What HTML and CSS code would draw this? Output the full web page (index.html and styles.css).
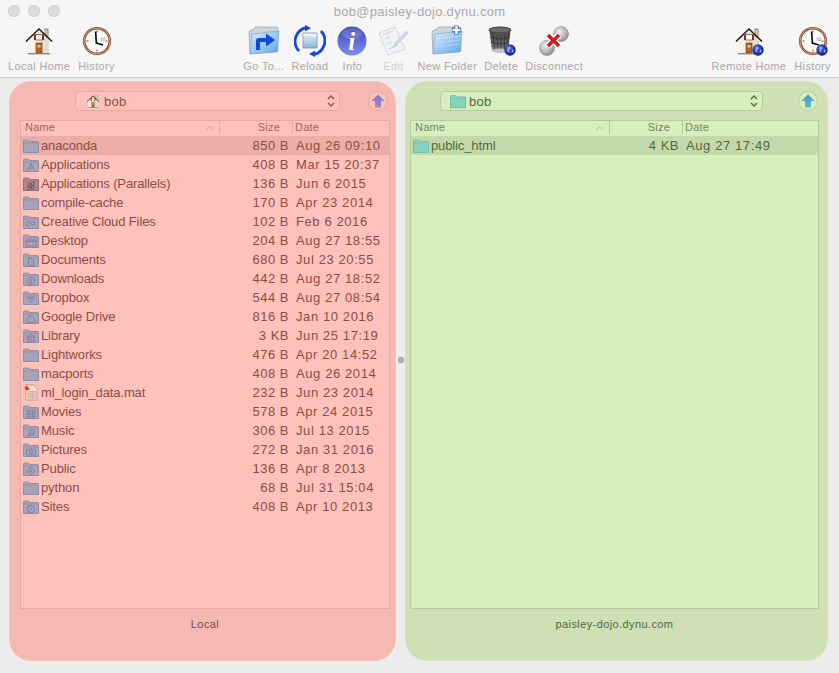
FILE: index.html
```html
<!DOCTYPE html>
<html lang="en">
<head>
    <meta charset="UTF-8">
    <meta name="viewport" content="width=device-width, initial-scale=1.0">
    <title>bob@paisley-dojo.dynu.com</title>
    <link rel="stylesheet" href="styles.css">
</head>
<body>
    <!-- shared icons -->
    <svg class="icon-defs" aria-hidden="true">
        <defs>
            <linearGradient id="blueFolder" x1="0" y1="0" x2="1" y2="1">
                <stop offset="0" stop-color="#d9ecfb"/>
                <stop offset="1" stop-color="#5fa6ea"/>
            </linearGradient>
            <linearGradient id="paleFolder" x1="0" y1="0" x2="0" y2="1">
                <stop offset="0" stop-color="#e8f1f8"/>
                <stop offset="1" stop-color="#8db9dd"/>
            </linearGradient>
            <linearGradient id="infoBlue" x1="0" y1="0" x2="0" y2="1">
                <stop offset="0" stop-color="#3a48b8"/>
                <stop offset="1" stop-color="#7f8fe8"/>
            </linearGradient>
            <linearGradient id="binGrey" x1="0" y1="0" x2="0" y2="1">
                <stop offset="0" stop-color="#4a4a4a"/>
                <stop offset="0.7" stop-color="#6b6b6b"/>
                <stop offset="1" stop-color="#c8c8c8"/>
            </linearGradient>
            <radialGradient id="ball" cx="0.4" cy="0.35" r="0.7">
                <stop offset="0" stop-color="#f2f2f2"/>
                <stop offset="1" stop-color="#8a8a8a"/>
            </radialGradient>
            <radialGradient id="globe" cx="0.4" cy="0.35" r="0.7">
                <stop offset="0" stop-color="#4c63e0"/>
                <stop offset="1" stop-color="#0c1a78"/>
            </radialGradient>
            <linearGradient id="upLocal" x1="0" y1="0" x2="0" y2="1">
                <stop offset="0" stop-color="#7c78d8"/>
                <stop offset="1" stop-color="#b083b8"/>
            </linearGradient>
            <linearGradient id="upRemote" x1="0" y1="0" x2="0" y2="1">
                <stop offset="0" stop-color="#3f93d8"/>
                <stop offset="1" stop-color="#6cbfb4"/>
            </linearGradient>

            <symbol id="house" viewBox="0 0 32 32">
                <rect x="22" y="4" width="3" height="8" fill="#d8cdbd" stroke="#554" stroke-width=".6"/>
                <path d="M6 15 L16 6 L26 15 V28 H6Z" fill="#e6dccb"/>
                <path d="M6 15 V28 H16 V9Z" fill="#f7f1e5"/>
                <path d="M3 16.5 L16 4 L29 16.5" fill="none" stroke="#1e1a18" stroke-width="1.6"/>
                <rect x="12.5" y="9.5" width="7" height="5.5" fill="#fff" stroke="#6b4030" stroke-width=".7"/>
                <rect x="11" y="9.5" width="2" height="5.5" fill="#8e2c1c"/>
                <rect x="19" y="9.5" width="2" height="5.5" fill="#8e2c1c"/>
                <rect x="13" y="18" width="6" height="10" fill="#b5622a" stroke="#6b3a1a" stroke-width=".6"/>
                <rect x="14.5" y="20" width="3" height="2.5" fill="#e9c48a"/>
                <rect x="5" y="28" width="22" height="1.4" fill="#8d8578"/>
            </symbol>

            <symbol id="clock" viewBox="0 0 32 32">
                <circle cx="16" cy="16" r="14" fill="#8d3f22"/>
                <circle cx="16" cy="16" r="13" fill="none" stroke="#c9a586" stroke-width="1"/>
                <circle cx="16" cy="16" r="11.5" fill="#f8f8f6"/>
                <path d="M16 5.5v2M16 24.5v2M5.5 16h2M24.5 16h2" stroke="#555" stroke-width="1"/>
                <path d="M14.6 6.5 L15.4 18 L22 20" fill="none" stroke="#111" stroke-width="1.7"/>
                <rect x="20" y="13" width="4" height="2.4" fill="#ddd" stroke="#999" stroke-width=".4"/>
            </symbol>

            <symbol id="goto" viewBox="0 0 32 32">
                <path d="M2 29 L1 8 Q1 5 4 5 L8 2 H28 L30 3 V26Z" fill="#cdd3da" stroke="#8a949e" stroke-width=".6"/>
                <path d="M2 29 L4 9 L31 6 L29 27Z" fill="url(#blueFolder)" stroke="#7a9fc4" stroke-width=".6"/>
                <path d="M12 25 H8 V16 Q8 13 11 13 H18 V8.5 L27 15 L18 21.5 V17 H13 Q12 17 12 18Z" fill="#0a48e0"/>
            </symbol>

            <symbol id="reload" viewBox="0 0 32 32">
                <path d="M9 8 H23 V23 H9Z" fill="url(#paleFolder)" stroke="#7d8b97" stroke-width=".7"/>
                <path d="M9 10 H23" stroke="#fff" stroke-width="1"/>
                <path d="M13 2.5 A14 14 0 0 0 5 26" fill="none" stroke="#1746e6" stroke-width="2.8"/>
                <path d="M19 29.5 A14 14 0 0 0 27 6" fill="none" stroke="#1746e6" stroke-width="2.8"/>
                <path d="M11 0 L17 3 L11 6.5Z" fill="#1746e6"/>
                <path d="M21 32 L15 29 L21 25.5Z" fill="#1746e6"/>
            </symbol>

            <symbol id="info" viewBox="0 0 32 32">
                <circle cx="16" cy="16" r="14.5" fill="url(#infoBlue)"/>
                <ellipse cx="16" cy="8.5" rx="10" ry="6" fill="#fff" opacity=".15"/>
                <text x="16" y="25" text-anchor="middle" class="info-letter">i</text>
            </symbol>

            <symbol id="edit" viewBox="0 0 32 32">
                <g opacity=".55">
                    <path d="M2 8 L18 2 L28 24 L11 30Z" fill="#eef1f6" stroke="#a9b0ba" stroke-width=".7"/>
                    <path d="M6 10 L16 6M8 14 L13 12M10 19 L15 17M12 24 L21 20" stroke="#a3acc4" stroke-width="1"/>
                    <path d="M17 19 L29 6 L31 8 L19 21 L16 22Z" fill="#b4bcd6" stroke="#8f98b5" stroke-width=".5"/>
                </g>
            </symbol>

            <symbol id="newfolder" viewBox="0 0 32 32">
                <path d="M2 29 L1 8 Q1 5 4 5 L8 2 H24 L30 3 V26Z" fill="#cdd3da" stroke="#8a949e" stroke-width=".6"/>
                <path d="M2 29 L4 9 L31 6 L29 27Z" fill="url(#blueFolder)" stroke="#7a9fc4" stroke-width=".6"/>
                <path d="M4 14 L30 11M4 18 L30 15M3.5 22 L29.5 19" stroke="#fff" stroke-width=".5" opacity=".5"/>
                <path d="M21 5h9M25.5 .5v9" stroke="#2c5fb8" stroke-width="4.4"/>
                <path d="M21.5 5h8M25.5 1v8" stroke="#fff" stroke-width="2.6"/>
            </symbol>

            <symbol id="trash" viewBox="0 0 32 32">
                <ellipse cx="13" cy="5" rx="11" ry="3" fill="#6a6a6a" stroke="#333" stroke-width="1"/>
                <path d="M2.5 6 L5 26 Q13 30 21 26 L23.5 6 Q13 10 2.5 6Z" fill="url(#binGrey)"/>
                <path d="M6 9 L8 27M10 10 L11 28M14 10 V28M18 9.5 L17 28M21.5 8 L20 26" stroke="#222" stroke-width=".6"/>
                <path d="M3 12 Q13 16 23 12M4 17 Q13 21 22 17" stroke="#222" stroke-width=".6" fill="none"/>
                <ellipse cx="13" cy="26" rx="8" ry="2.4" fill="#d8d8d8" opacity=".7"/>
            </symbol>

            <symbol id="disconnect" viewBox="0 0 32 32">
                <circle cx="23" cy="9" r="7.5" fill="url(#ball)" stroke="#777" stroke-width=".5"/>
                <circle cx="9" cy="23" r="7.5" fill="url(#ball)" stroke="#777" stroke-width=".5"/>
                <path d="M10 10 L21 21M21 10 L10 21" stroke="#fff" stroke-width="6.4"/>
                <path d="M10 10 L21 21M21 10 L10 21" stroke="#d8191f" stroke-width="3.6"/>
            </symbol>

            <symbol id="globe-badge" viewBox="0 0 12 12">
                <circle cx="6" cy="6" r="5.7" fill="url(#globe)"/>
                <path d="M3 3 L6 2.5 L7 4.5 L5 6 L5.5 9 L3.5 7.5Z M8 5.5 L10 6 L9 9 L7.5 8Z" fill="#8ea0f0"/>
            </symbol>

            <symbol id="folder" viewBox="0 0 16 14">
                <path d="M.5 13.5 V2 Q.5 1 1.5 1 H5.5 L7 2.5 H14.5 Q15.5 2.5 15.5 3.5 V13.5Z" class="folder-body"/>
                <path d="M.5 4 H15.5" class="folder-top"/>
            </symbol>
            <symbol id="g-apps" viewBox="0 0 16 14"><path d="M5 12 L8 5.5 L11 12M6 10 H10" class="folder-glyph"/></symbol>
            <symbol id="g-cloud" viewBox="0 0 16 14"><path d="M6.5 11 H5 A2 2 0 0 1 5 7 H7 L9 10 H11 A2 2 0 0 0 11 7 H9" class="folder-glyph"/></symbol>
            <symbol id="g-desktop" viewBox="0 0 16 14"><path d="M3 6 H13 V12 H3Z M3 7.5 H13" class="folder-glyph"/></symbol>
            <symbol id="g-doc" viewBox="0 0 16 14"><path d="M5.5 5.5 H9 L10.5 7 V12.5 H5.5Z" class="folder-glyph"/></symbol>
            <symbol id="g-down" viewBox="0 0 16 14"><circle cx="8" cy="9" r="3.6" class="folder-glyph"/><path d="M8 6.8 V11 M6.5 9.5 L8 11 L9.5 9.5" class="folder-glyph"/></symbol>
            <symbol id="g-dropbox" viewBox="0 0 16 14"><path d="M6 5.5 L8 7 L6 8.5 L4 7Z M10 5.5 L12 7 L10 8.5 L8 7Z M6 9.5 L8 11 L10 9.5" class="folder-glyph"/></symbol>
            <symbol id="g-drive" viewBox="0 0 16 14"><path d="M6.5 6 H9.5 L12.5 11 L11 12.5 H5 L3.5 11Z" class="folder-glyph"/></symbol>
            <symbol id="g-library" viewBox="0 0 16 14"><path d="M4 8 L8 5.5 L12 8Z M5 8.5 V11.5 M8 8.5 V11.5 M11 8.5 V11.5 M4 12 H12" class="folder-glyph"/></symbol>
            <symbol id="g-movies" viewBox="0 0 16 14"><path d="M4 6 H12 V12 H4Z M6.5 6 V12 M9.5 6 V12 M4 9 H12" class="folder-glyph"/></symbol>
            <symbol id="g-music" viewBox="0 0 16 14"><path d="M7 11 V6.5 L11 5.5 V10" class="folder-glyph"/><circle cx="6" cy="11" r="1.1" class="folder-glyph"/><circle cx="10" cy="10.2" r="1.1" class="folder-glyph"/></symbol>
            <symbol id="g-pictures" viewBox="0 0 16 14"><path d="M3.5 6.5 H6 L7 5.5 H9 L10 6.5 H12.5 V12 H3.5Z" class="folder-glyph"/><circle cx="8" cy="9" r="1.6" class="folder-glyph"/></symbol>
            <symbol id="g-public" viewBox="0 0 16 14"><path d="M8 5 L12 9 L8 13 L4 9Z M8 7.5 V10.5 M6.5 9 H9.5" class="folder-glyph"/></symbol>
            <symbol id="g-sites" viewBox="0 0 16 14"><circle cx="8" cy="9" r="3.7" class="folder-glyph"/><path d="M6.5 10.5 L9.5 7.5" class="folder-glyph"/></symbol>
            <symbol id="g-parallels" viewBox="0 0 16 14"><path d="M5 7 L7.5 6 V8.5 L5 9.5Z M8.5 5.8 L11 5 V7.8 L8.5 8.5Z M5 10.5 L7.5 9.5 V12 L5 13Z M8.5 9.5 L11 8.8 V11.5 L8.5 12Z" class="folder-glyph"/></symbol>

            <symbol id="mat-file" viewBox="0 0 16 18">
                <path d="M2.5 1 H11 L14.5 4.5 V17 H2.5Z" fill="#f8dcd2" stroke="#a08a80" stroke-width=".7"/>
                <path d="M5 8 H12.5 V15 H5Z M5 10.3 H12.5 M5 12.7 H12.5 M7.5 8 V15 M10 8 V15" fill="none" stroke="#b8968c" stroke-width=".6"/>
                <path d="M1 4 L4 1.5 L6.5 6 L3 7Z" fill="#cc4a20"/>
            </symbol>

            <symbol id="chevrons" viewBox="0 0 8 14">
                <path d="M1 5 L4 2 L7 5M1 9 L4 12 L7 9" fill="none" stroke="currentColor" stroke-width="1.3"/>
            </symbol>
        </defs>
    </svg>

    <div class="window">
        <div class="titlebar">
            <div class="lights">
                <span class="light"></span>
                <span class="light"></span>
                <span class="light"></span>
            </div>
            <div class="title">bob@paisley-dojo.dynu.com</div>
        </div>

        <div class="toolbar">
            <div class="tool-group tool-group-side">
                <div class="tool">
                    <svg class="tool-icon"><use href="#house"/></svg>
                    <span>Local Home</span>
                </div>
                <div class="tool">
                    <svg class="tool-icon"><use href="#clock"/></svg>
                    <span>History</span>
                </div>
            </div>
            <div class="tool-group">
                <div class="tool">
                    <svg class="tool-icon"><use href="#goto"/></svg>
                    <span>Go To...</span>
                </div>
                <div class="tool">
                    <svg class="tool-icon"><use href="#reload"/></svg>
                    <span>Reload</span>
                </div>
                <div class="tool">
                    <svg class="tool-icon"><use href="#info"/></svg>
                    <span>Info</span>
                </div>
                <div class="tool tool-disabled">
                    <svg class="tool-icon"><use href="#edit"/></svg>
                    <span>Edit</span>
                </div>
                <div class="tool">
                    <svg class="tool-icon"><use href="#newfolder"/></svg>
                    <span>New Folder</span>
                </div>
                <div class="tool">
                    <svg class="tool-icon" viewBox="0 0 32 32">
                        <use href="#trash" x="2" width="32" height="32"/>
                        <use href="#globe-badge" x="19" y="19" width="12" height="12"/>
                    </svg>
                    <span>Delete</span>
                </div>
                <div class="tool">
                    <svg class="tool-icon"><use href="#disconnect"/></svg>
                    <span>Disconnect</span>
                </div>
            </div>
            <div class="tool-group tool-group-side">
                <div class="tool">
                    <svg class="tool-icon" viewBox="0 0 32 32">
                        <use href="#house" width="32" height="32"/>
                        <use href="#globe-badge" x="19" y="19" width="12" height="12"/>
                    </svg>
                    <span>Remote Home</span>
                </div>
                <div class="tool">
                    <svg class="tool-icon" viewBox="0 0 32 32">
                        <use href="#clock" width="32" height="32"/>
                        <use href="#globe-badge" x="19" y="19" width="12" height="12"/>
                    </svg>
                    <span>History</span>
                </div>
            </div>
        </div>

        <div class="panes">
            <section class="pane pane-local">
                <div class="pane-head">
                    <div class="popup">
                        <svg class="popup-icon" viewBox="0 0 32 32"><use href="#house" width="32" height="32"/></svg>
                        <span class="popup-text">bob</span>
                        <svg class="popup-arrows"><use href="#chevrons"/></svg>
                    </div>
                    <div class="up-button">
                        <svg viewBox="0 0 14 14" class="up-arrow"><path d="M7 .5 L13.5 7 H10 V13.5 H4 V7 H.5Z" fill="url(#upLocal)"/></svg>
                    </div>
                </div>
                <div class="file-table">
                    <div class="file-header">
                        <div class="col-name">Name<span class="sort-caret"></span></div>
                        <div class="col-size">Size</div>
                        <div class="col-date">Date</div>
                    </div>
                    <div class="file-row selected">
                        <div class="name"><svg class="file-icon"><use href="#folder"/></svg>anaconda</div>
                        <div class="size">850 B</div><div class="date">Aug 26 09:10</div>
                    </div>
                    <div class="file-row">
                        <div class="name"><svg class="file-icon"><use href="#folder"/><use href="#g-apps"/></svg>Applications</div>
                        <div class="size">408 B</div><div class="date">Mar 15 20:37</div>
                    </div>
                    <div class="file-row">
                        <div class="name"><svg class="file-icon brownish"><use href="#folder"/><use href="#g-parallels"/></svg>Applications (Parallels)</div>
                        <div class="size">136 B</div><div class="date">Jun 6 2015</div>
                    </div>
                    <div class="file-row">
                        <div class="name"><svg class="file-icon"><use href="#folder"/></svg>compile-cache</div>
                        <div class="size">170 B</div><div class="date">Apr 23 2014</div>
                    </div>
                    <div class="file-row">
                        <div class="name"><svg class="file-icon"><use href="#folder"/><use href="#g-cloud"/></svg>Creative Cloud Files</div>
                        <div class="size">102 B</div><div class="date">Feb 6 2016</div>
                    </div>
                    <div class="file-row">
                        <div class="name"><svg class="file-icon"><use href="#folder"/><use href="#g-desktop"/></svg>Desktop</div>
                        <div class="size">204 B</div><div class="date">Aug 27 18:55</div>
                    </div>
                    <div class="file-row">
                        <div class="name"><svg class="file-icon"><use href="#folder"/><use href="#g-doc"/></svg>Documents</div>
                        <div class="size">680 B</div><div class="date">Jul 23 20:55</div>
                    </div>
                    <div class="file-row">
                        <div class="name"><svg class="file-icon"><use href="#folder"/><use href="#g-down"/></svg>Downloads</div>
                        <div class="size">442 B</div><div class="date">Aug 27 18:52</div>
                    </div>
                    <div class="file-row">
                        <div class="name"><svg class="file-icon"><use href="#folder"/><use href="#g-dropbox"/></svg>Dropbox</div>
                        <div class="size">544 B</div><div class="date">Aug 27 08:54</div>
                    </div>
                    <div class="file-row">
                        <div class="name"><svg class="file-icon"><use href="#folder"/><use href="#g-drive"/></svg>Google Drive</div>
                        <div class="size">816 B</div><div class="date">Jan 10 2016</div>
                    </div>
                    <div class="file-row">
                        <div class="name"><svg class="file-icon"><use href="#folder"/><use href="#g-library"/></svg>Library</div>
                        <div class="size">3 KB</div><div class="date">Jun 25 17:19</div>
                    </div>
                    <div class="file-row">
                        <div class="name"><svg class="file-icon"><use href="#folder"/></svg>Lightworks</div>
                        <div class="size">476 B</div><div class="date">Apr 20 14:52</div>
                    </div>
                    <div class="file-row">
                        <div class="name"><svg class="file-icon"><use href="#folder"/></svg>macports</div>
                        <div class="size">408 B</div><div class="date">Aug 26 2014</div>
                    </div>
                    <div class="file-row">
                        <div class="name"><svg class="file-icon doc-icon"><use href="#mat-file"/></svg>ml_login_data.mat</div>
                        <div class="size">232 B</div><div class="date">Jun 23 2014</div>
                    </div>
                    <div class="file-row">
                        <div class="name"><svg class="file-icon"><use href="#folder"/><use href="#g-movies"/></svg>Movies</div>
                        <div class="size">578 B</div><div class="date">Apr 24 2015</div>
                    </div>
                    <div class="file-row">
                        <div class="name"><svg class="file-icon"><use href="#folder"/><use href="#g-music"/></svg>Music</div>
                        <div class="size">306 B</div><div class="date">Jul 13 2015</div>
                    </div>
                    <div class="file-row">
                        <div class="name"><svg class="file-icon"><use href="#folder"/><use href="#g-pictures"/></svg>Pictures</div>
                        <div class="size">272 B</div><div class="date">Jan 31 2016</div>
                    </div>
                    <div class="file-row">
                        <div class="name"><svg class="file-icon"><use href="#folder"/><use href="#g-public"/></svg>Public</div>
                        <div class="size">136 B</div><div class="date">Apr 8 2013</div>
                    </div>
                    <div class="file-row">
                        <div class="name"><svg class="file-icon"><use href="#folder"/></svg>python</div>
                        <div class="size">68 B</div><div class="date">Jul 31 15:04</div>
                    </div>
                    <div class="file-row">
                        <div class="name"><svg class="file-icon"><use href="#folder"/><use href="#g-sites"/></svg>Sites</div>
                        <div class="size">408 B</div><div class="date">Apr 10 2013</div>
                    </div>
                </div>
                <div class="pane-label">Local</div>
            </section>

            <div class="splitter"><span class="split-dot"></span></div>

            <section class="pane pane-remote">
                <div class="pane-head">
                    <div class="popup">
                        <svg class="popup-icon" viewBox="0 0 16 14"><use href="#folder" width="16" height="14"/></svg>
                        <span class="popup-text">bob</span>
                        <svg class="popup-arrows"><use href="#chevrons"/></svg>
                    </div>
                    <div class="up-button">
                        <svg viewBox="0 0 14 14" class="up-arrow"><path d="M7 .5 L13.5 7 H10 V13.5 H4 V7 H.5Z" fill="url(#upRemote)"/></svg>
                    </div>
                </div>
                <div class="file-table">
                    <div class="file-header">
                        <div class="col-name">Name<span class="sort-caret"></span></div>
                        <div class="col-size">Size</div>
                        <div class="col-date">Date</div>
                    </div>
                    <div class="file-row selected">
                        <div class="name"><svg class="file-icon"><use href="#folder"/></svg>public_html</div>
                        <div class="size">4 KB</div><div class="date">Aug 27 17:49</div>
                    </div>
                </div>
                <div class="pane-label">paisley-dojo.dynu.com</div>
            </section>
        </div>
    </div>
</body>
</html>
```

FILE: styles.css
```css
* {
    box-sizing: border-box;
}
html, body {
    margin: 0;
    padding: 0;
    height: 100%;
    background-color: #fff;
}
body {
    font-family: "Liberation Sans", Arial, sans-serif;
    color: #333;
    overflow: hidden;
}
.icon-defs {
    display: block;
    width: 0;
    height: 0;
}
.window {
    display: flex;
    flex-direction: column;
    height: 673px;
    background-color: #ececec;
    border-radius: 5px 5px 0 0;
    overflow: hidden;
}

/* title bar + toolbar */
.titlebar {
    display: grid;
    grid-template-columns: 1fr auto 1fr;
    align-items: center;
    height: 22px;
    background-color: #f6f6f6;
}
.lights {
    display: flex;
    gap: 8px;
    padding-left: 8px;
}
.light {
    width: 12px;
    height: 12px;
    border-radius: 50%;
    background-color: #dcdcdc;
    box-shadow: inset 0 0 0 1px #d2d2d2;
}
.title {
    font-size: 13px;
    color: #a9a9a9;
    letter-spacing: 0.3px;
}
.toolbar {
    display: flex;
    justify-content: space-between;
    height: 56px;
    padding: 0 8px;
    background-color: #f6f6f6;
    border-bottom: 1px solid #d0d0d0;
}
.tool-group {
    display: flex;
    gap: 7px;
}
.tool-group-side {
    gap: 8px;
}
.tool {
    display: flex;
    flex-direction: column;
    align-items: center;
    min-width: 34px;
    padding-top: 3px;
    font-size: 11px;
    color: #a8a8a8;
    white-space: nowrap;
    letter-spacing: 0.35px;
}
.tool span {
    margin-top: 2px;
    line-height: 14px;
}
.tool-disabled {
    color: #d2d2d2;
}
.tool-icon {
    display: block;
    width: 32px;
    height: 32px;
}
.info-letter {
    font-family: "Liberation Serif", serif;
    font-style: italic;
    font-weight: bold;
    font-size: 25px;
    fill: #fff;
}

/* panes */
.panes {
    display: flex;
    flex: 1;
    padding: 3px 11px 12px 9px;
}
.pane {
    display: flex;
    flex-direction: column;
    border-radius: 22px;
    box-shadow: inset 0 0 0 1px rgba(255, 255, 255, 0.12);
}
.pane-local {
    width: 387px;
    flex-shrink: 0;
    padding: 0 6px 0 11px;
    background-color: #f5b9b1;
    --table-bg: #ffc2ba;
    --table-line: #e5a9a1;
    --select-bg: #ebaea6;
    --text: #8b4d48;
    --head-text: #a2625c;
    --label-text: #7a4a45;
    --folder: #a8a3b6;
    --folder-line: #918ca6;
    --glyph: #7f7b9c;
}
.pane-remote {
    flex: 1;
    padding: 0 9px 0 5px;
    background-color: #cee0b4;
    --table-bg: #d8eebd;
    --table-line: #b7cc9e;
    --select-bg: #c4d9a9;
    --text: #4f6a3f;
    --head-text: #6f8a5c;
    --label-text: #4a6a45;
    --folder: #86d3bd;
    --folder-line: #70bfa9;
    --glyph: #5fa893;
}
.splitter {
    display: flex;
    align-items: center;
    justify-content: center;
    width: 9px;
    flex-shrink: 0;
    padding-bottom: 22px;
}
.split-dot {
    width: 6px;
    height: 6px;
    border-radius: 50%;
    background-color: #b4b4b4;
    box-shadow: inset 0 0 0 1px #a6a6a6;
}
.pane-head {
    display: flex;
    align-items: center;
    height: 39px;
    padding-top: 1px;
}
.pane-local .pane-head {
    padding-left: 55px;
    padding-right: 2px;
    gap: 28px;
}
.pane-remote .pane-head {
    padding-left: 30px;
    padding-right: 1px;
    gap: 35px;
}
.popup {
    display: flex;
    align-items: center;
    flex: 1;
    height: 20px;
    padding: 0 4px 0 9px;
    background-color: var(--table-bg);
    border: 1px solid var(--table-line);
    border-radius: 4px;
    color: var(--text);
    font-size: 13px;
}
.popup-icon {
    width: 16px;
    height: 15px;
    margin-right: 3px;
}
.popup-text {
    flex: 1;
    letter-spacing: 0.3px;
}
.popup-arrows {
    width: 8px;
    height: 14px;
}
.up-button {
    display: flex;
    align-items: center;
    justify-content: center;
    width: 20px;
    height: 20px;
    border: 1px solid var(--table-line);
    border-radius: 50%;
    background-color: var(--table-bg);
}
.up-arrow {
    width: 14px;
    height: 14px;
}

/* file list */
.file-table {
    height: 489px;
    background-color: var(--table-bg);
    border: 1px solid var(--table-line);
    color: var(--text);
}
.file-header {
    display: grid;
    grid-template-columns: 199px 73px 1fr;
    height: 15px;
    font-size: 11px;
    line-height: 13px;
    color: var(--head-text);
    letter-spacing: 0.2px;
}
.file-header > div {
    height: 13px;
    border-right: 1px solid var(--table-line);
}
.file-header .col-date {
    border-right: none;
    padding-left: 2px;
}
.col-name {
    display: flex;
    justify-content: space-between;
    align-items: center;
    padding: 0 7px 0 4px;
}
.col-size {
    text-align: right;
    padding-right: 12px;
}
.sort-caret {
    width: 5px;
    height: 5px;
    margin-top: 4px;
    border-top: 1px solid var(--table-line);
    border-left: 1px solid var(--table-line);
    transform: rotate(45deg);
}
.file-row {
    display: grid;
    grid-template-columns: 198px 74px 1fr;
    height: 19px;
    font-size: 13px;
    line-height: 19px;
    white-space: nowrap;
}
.file-row.selected {
    background-color: var(--select-bg);
}
.name {
    display: flex;
    align-items: center;
    gap: 2px;
    padding-left: 2px;
    letter-spacing: -0.12px;
}
.size {
    text-align: right;
    padding-right: 4px;
    letter-spacing: 0.5px;
}
.date {
    padding-left: 3px;
    letter-spacing: 0.6px;
}
.file-icon {
    width: 16px;
    height: 14px;
    flex-shrink: 0;
}
.file-icon.doc-icon {
    height: 17px;
}
.file-icon.brownish {
    --folder: #ae868c;
    --folder-line: #966f76;
    --glyph: #7a5259;
}
.folder-body {
    fill: var(--folder);
    stroke: var(--folder-line);
    stroke-width: 1;
}
.folder-top {
    stroke: var(--folder-line);
    stroke-width: 0.6;
    fill: none;
}
.folder-glyph {
    fill: none;
    stroke: var(--glyph);
    stroke-width: 0.9;
}
.pane-label {
    padding-top: 8px;
    text-align: center;
    font-size: 11px;
    line-height: 14px;
    letter-spacing: 0.4px;
    color: var(--label-text);
}
```
